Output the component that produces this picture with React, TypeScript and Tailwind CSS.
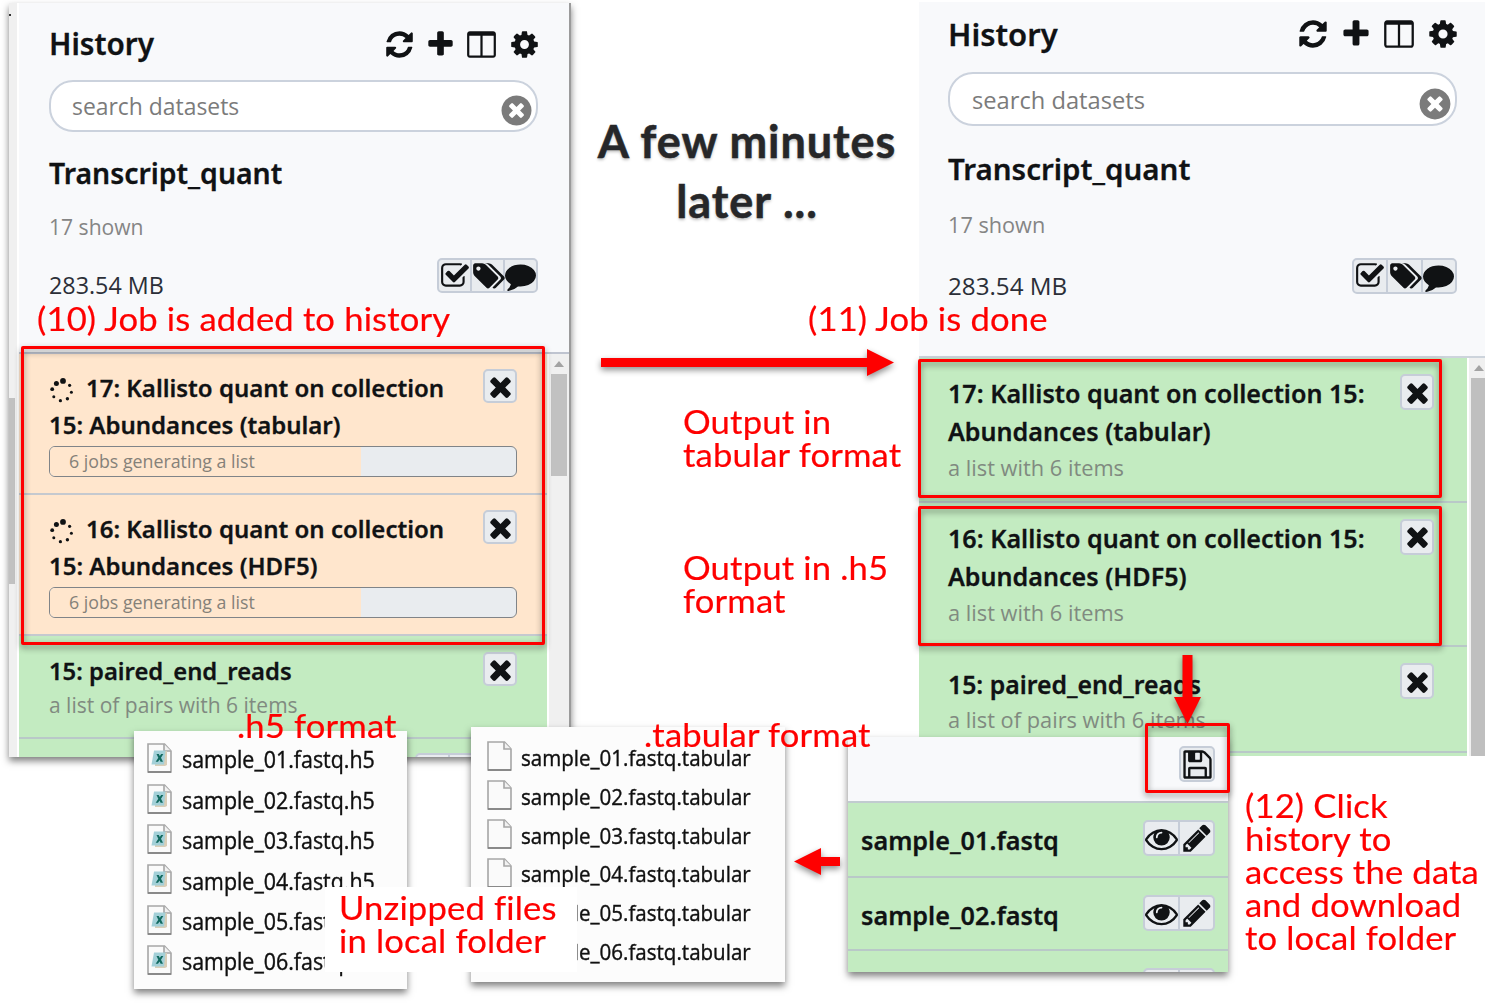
import type { ReactNode } from "react";

/* ---------- icons (1792-unit grid) ---------- */

const PATHS = {
  refresh:
    "M1639 1056q0 5-1 7-64 268-268 434.5t-478 166.5q-146 0-282.5-55t-243.5-157l-129 129q-19 19-45 19t-45-19-19-45v-448q0-26 19-45t45-19h448q26 0 45 19t19 45-19 45l-137 137q71 66 161 102t187 36q134 0 250-65t186-179q11-17 53-117 8-23 30-23h192q13 0 22.5 9.5t9.5 22.5zm25-800v448q0 26-19 45t-45 19h-448q-26 0-45-19t-19-45 19-45l138-138q-148-137-349-137-134 0-250 65t-186 179q-11 17-53 117-8 23-30 23h-199q-13 0-22.5-9.5t-9.5-22.5v-7q65-268 270-434.5t480-166.5q146 0 284 55.5t245 156.5l130-129q19-19 45-19t45 19 19 45z",
  plus: "M1600 736v192q0 40-28 68t-68 28h-416v416q0 40-28 68t-68 28h-192q-40 0-68-28t-28-68v-416h-416q-40 0-68-28t-28-68v-192q0-40 28-68t68-28h416v-416q0-40 28-68t68-28h192q40 0 68 28t28 68v416h416q40 0 68 28t28 68z",
  columns:
    "M224 1536h608v-1152h-640v1120q0 13 9.5 22.5t22.5 9.5zm1376-32v-1120h-640v1152h608q13 0 22.5-9.5t9.5-22.5zm128-1216v1216q0 66-47 113t-113 47h-1344q-66 0-113-47t-47-113v-1216q0-66 47-113t113-47h1344q66 0 113 47t47 113z",
  cog: "M1152 896q0-106-75-181t-181-75-181 75-75 181 75 181 181 75 181-75 75-181zm512-109v222q0 12-8 23t-20 13l-185 28q-19 54-39 91 35 50 107 138 10 12 10 25t-9 23q-27 37-99 108t-94 71q-12 0-26-9l-138-108q-44 23-91 38-16 136-29 186-7 28-36 28h-222q-14 0-24.5-8.5t-11.5-21.5l-28-184q-49-16-90-37l-141 107q-10 9-25 9-14 0-25-11-126-114-165-168-7-10-7-23 0-12 8-23 15-21 51-66.5t54-70.5q-27-50-41-99l-183-27q-13-2-21-12.5t-8-23.5v-222q0-12 8-23t19-13l186-28q14-46 39-92-40-57-107-138-10-12-10-24 0-10 9-23 26-36 98.5-107.5t94.5-71.5q13 0 26 10l138 107q44-23 91-38 16-136 29-186 7-28 36-28h222q14 0 24.5 8.5t11.5 21.5l28 184q49 16 90 37l142-107q9-9 24-9 13 0 25 10 129 119 165 170 7 8 7 22 0 12-8 23-15 21-51 66.5t-54 70.5q26 50 41 98l183 28q13 2 21 12.5t8 23.5z",
  times:
    "M1490 1322q0 40-28 68l-136 136q-28 28-68 28t-68-28l-294-294-294 294q-28 28-68 28t-68-28l-136-136q-28-28-28-68t28-68l294-294-294-294q-28-28-28-68t28-68l136-136q28-28 68-28t68 28l294 294 294-294q28-28 68-28t68 28l136 136q28 28 28 68t-28 68l-294 294 294 294q28 28 28 68z",
  clear:
    "M1277 1122q0-26-19-45l-181-181 181-181q19-19 19-45 0-27-19-46l-90-90q-19-19-46-19-26 0-45 19l-181 181-181-181q-19-19-45-19-27 0-46 19l-90 90q-19 19-19 46 0 26 19 45l181 181-181 181q-19 19-19 45 0 27 19 46l90 90q19 19 46 19 26 0 45-19l181-181 181 181q19 19 45 19 27 0 46-19l90-90q19-19 19-46zm387-226q0 209-103 385.5t-279.5 279.5-385.5 103-385.5-103-279.5-279.5-103-385.5 103-385.5 279.5-279.5 385.5-103 385.5 103 279.5 279.5 103 385.5z",
  check:
    "M1472 930v318q0 119-84.5 203.5t-203.5 84.5h-832q-119 0-203.5-84.5t-84.5-203.5v-832q0-119 84.5-203.5t203.5-84.5h832q63 0 117 25 15 7 18 23 3 17-9 29l-49 49q-10 10-23 10-3 0-9-2-23-6-45-6h-832q-66 0-113 47t-47 113v832q0 66 47 113t113 47h832q66 0 113-47t47-113v-254q0-13 9-22l64-64q10-10 23-10 6 0 12 3 20 8 20 29zm231-489l-814 814q-24 24-57 24t-57-24l-430-430q-24-24-24-57t24-57l110-110q24-24 57-24t57 24l263 263 647-647q24-24 57-24t57 24l110 110q24 24 24 57t-24 57z",
  tags: "M576 448q0-53-37.5-90.5t-90.5-37.5-90.5 37.5-37.5 90.5 37.5 90.5 90.5 37.5 90.5-37.5 37.5-90.5zm1067 576q0 53-37 90l-491 492q-39 37-91 37-53 0-90-37l-715-716q-38-37-64.5-101t-26.5-117v-416q0-52 38-90t90-38h416q53 0 117 26.5t102 64.5l715 714q37 39 37 91zm384 0q0 53-37 90l-491 492q-39 37-91 37-36 0-59-14t-53-45l470-470q37-37 37-90 0-52-37-91l-715-714q-38-38-102-64.5t-117-26.5h224q53 0 117 26.5t102 64.5l715 714q37 39 37 91z",
  comment:
    "M1792 896q0 174-120 321.5t-326 233-450 85.5q-70 0-145-8-198 175-460 242-49 14-114 22-17 2-30.5-9t-17.5-29v-1q-3-4-.5-12t2-10 4.5-9.5l6-9 7-8.5 8-9q7-8 31-34.5t34.5-38 31-39.5 32.5-51 27-59 26-76q-157-89-247.5-220t-90.5-281q0-130 71-248.5t191-204.5 286-136.5 348-50.5q244 0 450 85.5t326 233 120 321.5z",
  save: "M512 1536h768v-384h-768v384zm896 0h128v-896q0-14-10-38.5t-20-34.5l-281-281q-10-10-34-20t-39-10v416q0 40-28 68t-68 28h-576q-40 0-68-28t-28-68v-416h-128v1280h128v-416q0-40 28-68t68-28h832q40 0 68 28t28 68v416zm-384-928v-320q0-13-9.5-22.5t-22.5-9.5h-192q-13 0-22.5 9.5t-9.5 22.5v320q0 13 9.5 22.5t22.5 9.5h192q13 0 22.5-9.5t9.5-22.5zm640 32v928q0 40-28 68t-68 28h-1344q-40 0-68-28t-28-68v-1344q0-40 28-68t68-28h928q40 0 88 20t76 48l280 280q28 28 48 76t20 88z",
  eye: "M1664 960q-152-236-381-353 61 104 61 225 0 185-131.5 316.5t-316.5 131.5-316.5-131.5-131.5-316.5q0-121 61-225-229 117-381 353 133 205 333.5 326.5t434.5 121.5 434.5-121.5 333.5-326.5zm-720-384q0-20-14-34t-34-14q-125 0-214.5 89.5t-89.5 214.5q0 20 14 34t34 14 34-14 14-34q0-86 61-147t147-61q20 0 34-14t14-34zm848 384q0 34-20 69-140 230-376.5 368.5t-499.5 138.5-499.5-139-376.5-368q-20-35-20-69t20-69q140-229 376.5-368t499.5-139 499.5 139 376.5 368q20 35 20 69z",
  pencil:
    "M491 1536l91-91-235-235-91 91v107h128v128h107zm523-928q0-22-22-22-10 0-17 7l-542 542q-7 7-7 17 0 22 22 22 10 0 17-7l542-542q7-7 7-17zm-54-192l416 416-832 832h-416v-416zm683 96q0 53-37 90l-166 166-416-416 166-165q36-38 90-38 53 0 91 38l235 234q37 39 37 91z",
};

function Icon({ name, className = "size-[31px]" }: { name: keyof typeof PATHS; className?: string }) {
  return (
    <svg
      viewBox={name === "tags" ? "0 0 2048 1792" : "0 0 1792 1792"}
      className={`shrink-0 fill-current ${className}`}
    >
      <path d={PATHS[name]} />
    </svg>
  );
}

function Spinner() {
  const dots = [
    [13, 2.9, 2.9],
    [6.4, 5.4, 2.5],
    [2.2, 11.2, 1.9],
    [3.8, 18.8, 1.5],
    [10.4, 22.7, 1.6],
    [17.4, 20.7, 1.7],
    [21.4, 14.3, 1.5],
    [19.6, 7.3, 1.6],
  ];
  return (
    <svg viewBox="0 0 25 26" className="mr-[11px] ml-px inline-block h-[26px] w-[25px] align-middle fill-[#101214]">
      {dots.map(([x, y, r]) => (
        <circle key={y} cx={x} cy={y} r={r} />
      ))}
    </svg>
  );
}

function PageIcon({ sheet = false }: { sheet?: boolean }) {
  return (
    <svg viewBox="0 0 25 30" className="h-[30px] w-[25px] shrink-0">
      <path d="M1 1h16.500l6.500 7v21H1z" fill="#fafafa" stroke="#a6a6a6" strokeWidth="1.600" />
      <path d="M17 1v7h7" fill="#f1f1f1" stroke="#a6a6a6" strokeWidth="1.600" />
      <path d="M1 29h23" stroke="#7d7d7d" strokeWidth="1.600" />
      {sheet && (
        <>
          <path d="M8 8h12v14l-2 1H8z" fill="#d9ceb8" />
          <path d="M7 7.500h11.500l-1.500 14H4.500z" fill="#a3d0d8" />
          <path d="M9.500 11h2.300l1 2 1.300-2h2.200l-2.300 3.700 2 4h-2.400l-1.100-2.300-1.500 2.300H8.700l2.600-4z" fill="#11695f" />
        </>
      )}
    </svg>
  );
}

/* ---------- history panels ---------- */

function IconButtons({ className, children }: { className: string; children: ReactNode }) {
  return (
    <div
      className={`flex shrink-0 divide-x-2 divide-[#c6cdd8] overflow-hidden rounded-[5px] border-2 border-[#c6cdd8] bg-[#e9ecef] text-[#101214] ${className}`}
    >
      {children}
    </div>
  );
}

function Cell({ children }: { children: ReactNode }) {
  return <div className="flex min-w-0 flex-1 items-center justify-center">{children}</div>;
}

function RemoveButton({ className }: { className: string }) {
  return (
    <IconButtons className={className}>
      <Cell>
        <Icon name="times" />
      </Cell>
    </IconButtons>
  );
}

function ScrollArrow() {
  return (
    <svg viewBox="0 0 10 6" className="h-[6px] w-[10px] fill-[#a3a3a3]">
      <path d="M0 6 5 0l5 6z" />
    </svg>
  );
}

function DatasetActions({ className }: { className: string }) {
  return (
    <IconButtons className={className}>
      <Cell>
        <Icon name="check" className="size-[30px]" />
      </Cell>
      <Cell>
        <Icon name="tags" className="h-[30px] w-[34px]" />
      </Cell>
      <Cell>
        <Icon name="comment" />
      </Cell>
    </IconButtons>
  );
}

function RunningItem({ first, second }: { first: string; second: string }) {
  return (
    <div className="h-[141px] border-b-2 border-[#c5c9cf] bg-[#ffe6cd] pt-[15px] pr-[30px] pl-[30px]">
      <div className="flex h-[73px] justify-between">
        <div className="pt-px font-['Noto_Sans',sans-serif] text-[24px] leading-[36.5px] font-semibold whitespace-nowrap text-[#101214] [-webkit-text-stroke:0.3px_#101214]">
          <div className="h-[36.5px]">
            <Spinner />
            {first}
          </div>
          <div>{second}</div>
        </div>
        <RemoveButton className="h-[34px] w-[34px]" />
      </div>
      <div className="mt-[4px] flex h-[31px] overflow-hidden rounded-[6px] border-[1.500px] border-[#808488] bg-[#e9ecef]">
        <div className="w-[311px] bg-[#ffe6cd] pl-[19px] text-[17.800px] leading-[29px] whitespace-nowrap text-[#858179]">
          6 jobs generating a list
        </div>
      </div>
    </div>
  );
}

function DoneItem({ lines, note }: { lines: string[]; note: string }) {
  return (
    <div className="flex h-[144.700px] shrink-0 justify-between border-b-2 border-[#b9c8c8] bg-[#c3ebc1] pt-[16px] pr-[33px] pl-[29px]">
      <div className="whitespace-nowrap">
        {lines.map((line) => (
          <div
            key={line}
            className="font-['Noto_Sans',sans-serif] text-[25.100px] leading-[38px] font-semibold text-[#101214] [-webkit-text-stroke:0.3px_#101214]"
          >
            {line}
          </div>
        ))}
        <div className="text-[21.800px] leading-[35px] text-[#808a80]">{note}</div>
      </div>
      <RemoveButton className="h-[36px] w-[34px]" />
    </div>
  );
}

function RunningPanel() {
  return (
    <section className="absolute top-[3px] left-[9px] flex h-[754px] w-[562px] overflow-hidden border-r-2 border-[#9b9b9b] bg-[#f8f9fb]">
      <div className="w-[10px] shrink-0 border-r-2 border-white bg-[#f0f0f0]">
        <div className="h-[13px] overflow-hidden pt-[11px]">
          <div className="size-[2px] bg-[#333]" />
        </div>
        <div className="mt-[382px] h-[186px] w-[6px] bg-[#c1c1c1]" />
      </div>
      <div className="flex min-w-0 flex-1 flex-col">
        <header className="h-[351px] shrink-0 border-b-2 border-[#bfc4d0] pt-[21px] pr-[31px] pl-[30px]">
          <div className="flex h-[40px] items-center justify-between">
            <h1 className="font-['Noto_Sans',sans-serif] text-[29.700px] leading-[40px] font-semibold text-[#101214] [-webkit-text-stroke:0.3px_#101214]">
              History
            </h1>
            <div className="mr-[-2px] flex items-center gap-[10px] text-[#101214]">
              <Icon name="refresh" />
              <Icon name="plus" />
              <Icon name="columns" />
              <Icon name="cog" className="ml-[2px] size-[31px]" />
            </div>
          </div>
          <div className="mt-[16px] flex h-[52px] items-center justify-between rounded-[24px] border-2 border-[#cbd2dd] bg-white pr-[2px] pl-[21px]">
            <span className="mt-[3px] text-[22.900px] text-[#7b7b7b]">search datasets</span>
            <Icon name="clear" className="mt-[9px] size-[35px] text-[#7b7b7b]" />
          </div>
          <h2 className="mt-[21px] font-['Noto_Sans',sans-serif] text-[28.400px] leading-[40px] font-semibold text-[#101214] [-webkit-text-stroke:0.3px_#101214]">
            Transcript_quant
          </h2>
          <p className="mt-[19px] text-[21.100px] leading-[30px] text-[#858585]">17 shown</p>
          <div className="mt-[16px] flex justify-between">
            <p className="mt-[12px] text-[23.300px] leading-[30px] text-[#2b2f38]">283.54 MB</p>
            <DatasetActions className="h-[35px] w-[101px]" />
          </div>
        </header>
        <div className="flex min-h-0 flex-1">
          <div className="w-[528px] shrink-0">
            <RunningItem first="17: Kallisto quant on collection" second="15: Abundances (tabular)" />
            <RunningItem first="16: Kallisto quant on collection" second="15: Abundances (HDF5)" />
            <div className="flex h-[103px] justify-between border-b-2 border-[#b9c8c8] bg-[#c3ebc1] pt-[16px] pr-[30px] pl-[30px]">
              <div className="pt-px whitespace-nowrap">
                <div className="font-['Noto_Sans',sans-serif] text-[23.800px] leading-[36px] font-semibold text-[#101214] [-webkit-text-stroke:0.3px_#101214]">
                  15: paired_end_reads
                </div>
                <div className="text-[21px] leading-[33px] text-[#808a80]">a list of pairs with 6 items</div>
              </div>
              <RemoveButton className="h-[34px] w-[34px]" />
            </div>
            <div className="flex h-[40px] justify-end bg-[#c3ebc1] pt-[14px] pr-[30px]">
              <IconButtons className="h-[34px] w-[102px]">
                <Cell>{null}</Cell>
                <Cell>{null}</Cell>
                <Cell>{null}</Cell>
              </IconButtons>
            </div>
          </div>
          <div className="flex flex-1 flex-col items-center border-l-2 border-white bg-[#f0f0f0] pt-[7px]">
            <ScrollArrow />
            <div className="mt-[7px] h-[102px] w-[16px] bg-[#c1c1c1]" />
          </div>
        </div>
      </div>
    </section>
  );
}

function DonePanel() {
  return (
    <section className="absolute top-[2px] left-[919px] flex h-[754px] w-[566px] flex-col overflow-hidden bg-[#f8f9fb]">
      <header className="h-[356px] shrink-0 border-b-2 border-[#cdd4dc] pt-[12px] pr-[28px] pl-[29px]">
        <div className="flex h-[40px] items-center justify-between">
          <h1 className="font-['Noto_Sans',sans-serif] text-[31px] leading-[40px] font-semibold text-[#101214] [-webkit-text-stroke:0.3px_#101214]">
            History
          </h1>
          <div className="mr-[-2px] flex items-center gap-[11px] text-[#101214]">
            <Icon name="refresh" className="size-[32px]" />
            <Icon name="plus" className="size-[32px]" />
            <Icon name="columns" className="size-[32px]" />
            <Icon name="cog" className="ml-px size-[32px]" />
          </div>
        </div>
        <div className="mt-[18px] flex h-[54px] items-center justify-between rounded-[25px] border-2 border-[#cbd2dd] bg-white pr-[2px] pl-[22px]">
          <span className="mt-[3px] text-[23.700px] text-[#7b7b7b]">search datasets</span>
          <Icon name="clear" className="mt-[9px] size-[36px] text-[#7b7b7b]" />
        </div>
        <h2 className="mt-[23px] font-['Noto_Sans',sans-serif] text-[29.500px] leading-[40px] font-semibold text-[#101214] [-webkit-text-stroke:0.3px_#101214]">
          Transcript_quant
        </h2>
        <p className="mt-[21px] text-[21.700px] leading-[30px] text-[#858585]">17 shown</p>
        <div className="mt-[18px] flex justify-between">
          <p className="mt-[13px] text-[24.200px] leading-[30px] text-[#2b2f38]">283.54 MB</p>
          <DatasetActions className="h-[36px] w-[105px]" />
        </div>
      </header>
      <div className="flex min-h-0 flex-1">
        <div className="flex w-[548px] shrink-0 flex-col">
          <DoneItem
            lines={["17: Kallisto quant on collection 15:", "Abundances (tabular)"]}
            note="a list with 6 items"
          />
          <DoneItem
            lines={["16: Kallisto quant on collection 15:", "Abundances (HDF5)"]}
            note="a list with 6 items"
          />
          <div className="flex h-[106px] shrink-0 justify-between border-b-2 border-[#b9c8c8] bg-[#c3ebc1] pt-[16px] pr-[33px] pl-[29px]">
            <div className="pt-[2px] whitespace-nowrap">
              <div className="font-['Noto_Sans',sans-serif] text-[24.800px] leading-[38px] font-semibold text-[#101214] [-webkit-text-stroke:0.3px_#101214]">
                15: paired_end_reads
              </div>
              <div className="text-[21.800px] leading-[34px] text-[#808a80]">a list of pairs with 6 items</div>
            </div>
            <RemoveButton className="h-[36px] w-[34px]" />
          </div>
          <div className="flex-1 bg-[#c3ebc1]" />
        </div>
        <div className="flex flex-1 flex-col items-end border-l-2 border-white bg-[#f0f0f0] pt-[7px]">
          <div className="mr-px">
            <ScrollArrow />
          </div>
          <div className="mt-[7px] w-[14px] flex-1 bg-[#bfbfbf]" />
        </div>
      </div>
    </section>
  );
}

/* ---------- file and sample cards ---------- */

const NUMBERS = ["01", "02", "03", "04", "05", "06"];

function H5Files() {
  return (
    <section className="absolute top-[731px] left-[134px] h-[258px] w-[273px] bg-[#fcfcfc] pt-[7px] pl-[13px] shadow-[0_4px_7px_rgba(0,0,0,0.5)]">
      {NUMBERS.map((n) => (
        <div key={n} className="flex h-[40.400px] items-center">
          <PageIcon sheet />
          <span className="ml-[10px] origin-left scale-x-[0.93] pt-[3px] text-[23px] whitespace-nowrap text-[#101010] [-webkit-text-stroke:0.4px_#101010]">
            sample_{n}.fastq.h5
          </span>
        </div>
      ))}
    </section>
  );
}

function TabularFiles() {
  return (
    <section className="absolute top-[727px] left-[471px] h-[255px] w-[314px] bg-[#fcfcfc] pt-[10px] pl-[16px] shadow-[0_4px_7px_rgba(0,0,0,0.5)]">
      {NUMBERS.map((n) => (
        <div key={n} className="flex h-[38.800px] items-center">
          <PageIcon />
          <span className="ml-[9px] origin-left scale-x-[0.913] pt-[3px] text-[22.500px] whitespace-nowrap text-[#101010] [-webkit-text-stroke:0.4px_#101010]">
            sample_{n}.fastq.tabular
          </span>
        </div>
      ))}
    </section>
  );
}

function SampleRow({ name, className }: { name: string; className: string }) {
  return (
    <div
      className={`flex shrink-0 justify-between border-b-2 border-[#b9c8c8] bg-[#c3ebc1] pt-[17px] pr-[13px] pl-[13px] ${className}`}
    >
      <span className="mt-[1px] font-['Noto_Sans',sans-serif] text-[25.200px] leading-[38px] font-semibold text-[#101214] [-webkit-text-stroke:0.3px_#101214]">
        {name}
      </span>
      <IconButtons className="h-[36px] w-[72px]">
        <Cell>
          <Icon name="eye" className="size-[33px]" />
        </Cell>
        <Cell>
          <Icon name="pencil" className="size-[32px]" />
        </Cell>
      </IconButtons>
    </div>
  );
}

function SampleCard() {
  return (
    <section className="absolute top-[737px] left-[848px] h-[235px] w-[380px] shadow-[0_4px_7px_rgba(0,0,0,0.5)]">
      <div className="flex h-full flex-col overflow-hidden">
        <div className="flex h-[66px] shrink-0 justify-end border-b-2 border-[#c1cbd0] bg-[#f8f9fb] pt-[9px] pr-[13px]">
          <IconButtons className="h-[36px] w-[36px]">
            <Cell>
              <Icon name="save" className="size-[33px]" />
            </Cell>
          </IconButtons>
        </div>
        <SampleRow name="sample_01.fastq" className="h-[75px]" />
        <SampleRow name="sample_02.fastq" className="h-[73px]" />
        <SampleRow name="" className="h-[75px]" />
      </div>
    </section>
  );
}

/* ---------- annotations ---------- */

function Frame({ className }: { className: string }) {
  return (
    <div
      className={`absolute rounded-[2px] border-[3px] border-[#fe0000] drop-shadow-[0_3px_3px_rgba(0,0,0,0.45)] ${className}`}
    />
  );
}

function Note({ className, lines }: { className: string; lines: string[] }) {
  return (
    <div
      className={`absolute origin-left scale-x-[1.065] font-['Lato',sans-serif] text-[32.500px] leading-[33px] tracking-[0.150px] whitespace-nowrap text-[#fe0000] [-webkit-text-stroke:0.2px_#fe0000] [font-variant-ligatures:none] ${className}`}
    >
      {lines.map((line) => (
        <div key={line}>{line}</div>
      ))}
    </div>
  );
}

function Arrow({ className, box, d }: { className: string; box: string; d: string }) {
  return (
    <svg
      viewBox={box}
      className={`absolute overflow-visible fill-[#fe0000] drop-shadow-[0_3px_3px_rgba(0,0,0,0.45)] ${className}`}
    >
      <path d={d} />
    </svg>
  );
}

export default function App() {
  return (
    <main className="relative h-[1004px] w-[1510px] overflow-hidden bg-white font-['Open_Sans',sans-serif]">
      <div className="absolute top-[3px] left-[9px] h-[754px] w-[562px] shadow-[0_4px_7px_rgba(0,0,0,0.5)]" />
      <RunningPanel />
      <DonePanel />
      <H5Files />
      <TabularFiles />
      <SampleCard />

      <h2 className="absolute top-[112px] left-[587px] w-[320px] text-center font-['Lato',sans-serif] text-[45px] leading-[59.500px] font-bold tracking-[0.950px] whitespace-nowrap text-[#262729] [-webkit-text-stroke:0.5px_#262729] [text-shadow:0_2px_3px_rgba(0,0,0,0.25)]">
        A few minutes
        <br />
        later ...
      </h2>

      <Arrow
        className="top-[349px] left-[601px] h-[27px] w-[293px]"
        box="0 0 293 27"
        d="M0 9h266V0l27 13.500L266 27v-9H0z"
      />
      <Arrow
        className="top-[655px] left-[1174px] h-[69px] w-[27px]"
        box="0 0 27 69"
        d="M8.500 0h10v42H27L13.500 69 0 42h8.500z"
      />
      <Arrow
        className="top-[848px] left-[794px] h-[27px] w-[46px]"
        box="0 0 46 27"
        d="M46 9H27V0L0 13.500 27 27v-9h19z"
      />

      <Frame className="top-[346px] left-[21px] h-[299px] w-[524px]" />
      <Frame className="top-[359px] left-[918px] h-[139px] w-[524px]" />
      <Frame className="top-[506px] left-[918px] h-[140px] w-[524px]" />
      <Frame className="top-[723px] left-[1145px] h-[70px] w-[85px]" />

      <div className="absolute top-[887px] left-[325px] h-[85px] w-[252px] bg-white" />

      <Note className="top-[302px] left-[37px]" lines={["(10) Job is added to history"]} />
      <Note className="top-[302px] left-[808px]" lines={["(11) Job is done"]} />
      <Note className="top-[405px] left-[683px]" lines={["Output in", "tabular format"]} />
      <Note className="top-[551px] left-[683px]" lines={["Output in .h5", "format"]} />
      <Note className="top-[709px] left-[237px]" lines={[".h5 format"]} />
      <Note className="top-[718px] left-[644px]" lines={[".tabular format"]} />
      <Note className="top-[891px] left-[339px]" lines={["Unzipped files", "in local folder"]} />
      <Note
        className="top-[789px] left-[1245px]"
        lines={["(12) Click", "history to", "access the data", "and download", "to local folder"]}
      />
    </main>
  );
}
